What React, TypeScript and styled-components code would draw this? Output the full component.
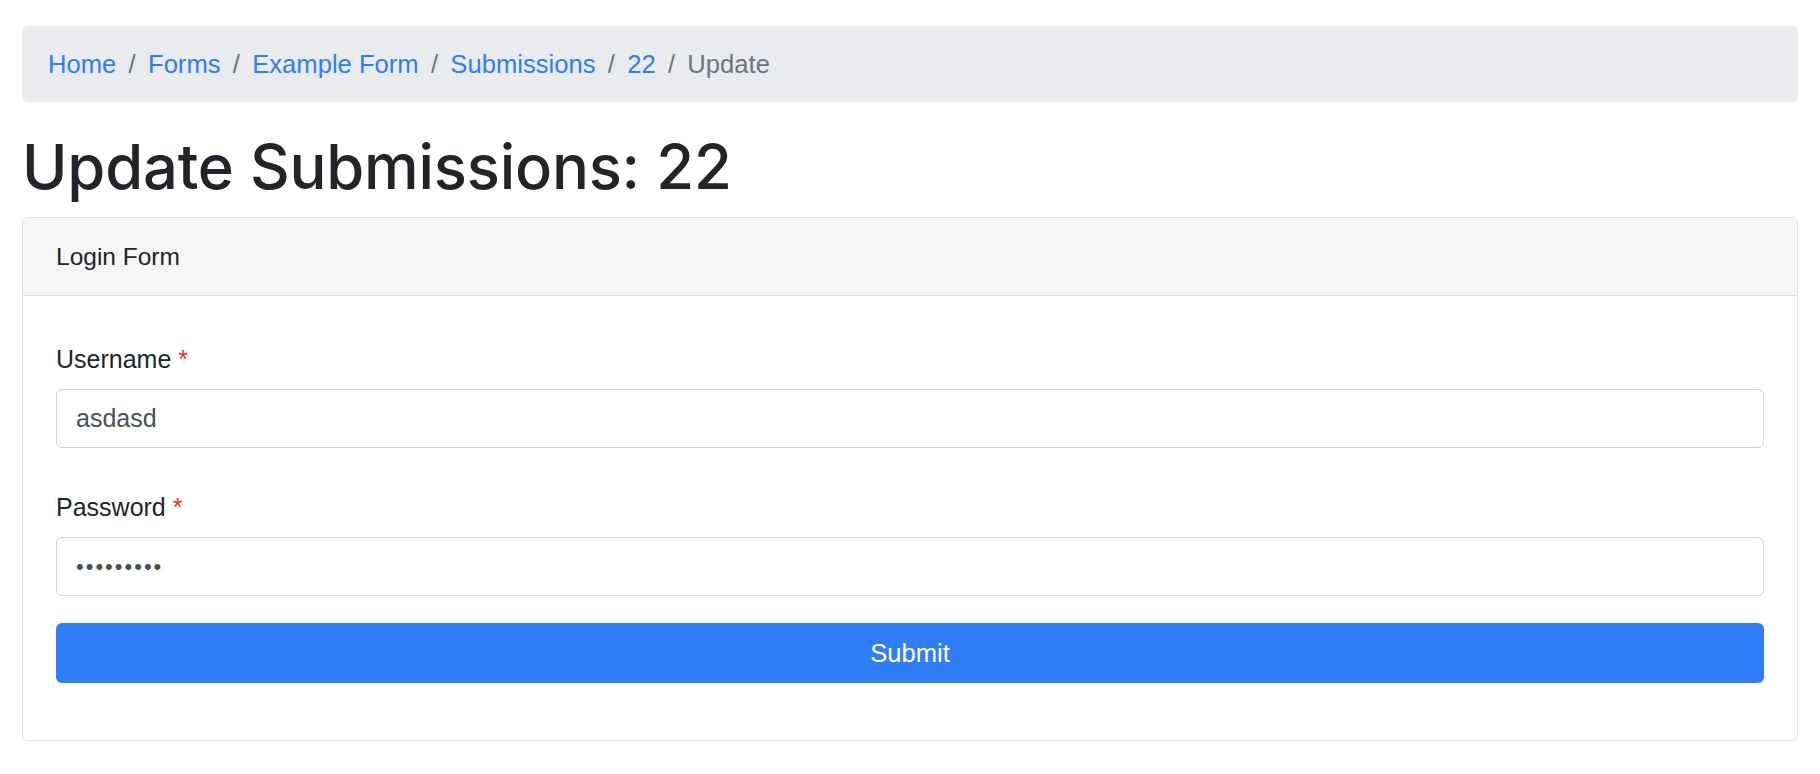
import styled, { createGlobalStyle } from "styled-components";

const GlobalStyle = createGlobalStyle`
    * {
        box-sizing: border-box;
    }
    body {
        margin: 0;
        background: #ffffff;
        font-family: "Liberation Sans", Arial, sans-serif;
        color: #212529;
    }
`;

const StyledPage = styled.div`
    padding: 26px 22px 0 22px;
`;

const StyledBreadcrumb = styled.nav`
    display: flex;
    align-items: center;
    height: 76px;
    padding: 0 26px;
    background: #e9ebef;
    border-radius: 6px;
    font-size: 25.6px;
    margin-bottom: 28px;
`;

const StyledCrumb = styled.a<{ active?: boolean }>`
    color: ${props => props.active ? '#6c757d' : '#2f7df6'};
    text-decoration: none;
    cursor: ${props => props.active ? 'default' : 'pointer'};
`;

const StyledDivider = styled.span`
    color: #6c757d;
    padding: 0 12.3px;
`;

const StyledTitle = styled.h1`
    margin: 0 0 13px 0;
    font-family: Inter, "Liberation Sans", Arial, sans-serif;
    font-size: 61.5px;
    font-weight: 500;
    line-height: 74px;
    letter-spacing: -0.2px;
    color: #212529;
`;

const StyledCard = styled.div`
    border: 1px solid #dfe1e5;
    border-radius: 6px;
    overflow: hidden;
`;

const StyledCardHeader = styled.div`
    height: 78px;
    display: flex;
    align-items: center;
    padding: 0 33px;
    background: #f6f6f6;
    border-bottom: 1px solid #d9dbdf;
    font-size: 24.5px;
`;

const StyledCardBody = styled.form`
    padding: 44px 33px 57px 33px;
    display: flex;
    flex-direction: column;
`;

const StyledFormGroup = styled.div<{ spacing: number }>`
    display: flex;
    flex-direction: column;
    margin-bottom: ${props => props.spacing}px;
`;

const StyledLabel = styled.label`
    font-size: 25px;
    line-height: 38px;
    margin-bottom: 11px;
    color: #212529;
`;

const StyledRequired = styled.span`
    color: #e8302a;
    margin-left: 7px;
`;

const StyledInput = styled.input`
    height: 59px;
    width: 100%;
    padding: 0 19px;
    border: 1.5px solid #cdd1d7;
    border-radius: 6px;
    font-family: "Liberation Sans", Arial, sans-serif;
    font-size: 25px;
    color: #495057;
    background: #ffffff;
    outline: none;

    &[type="password"] {
        letter-spacing: 2px;
        font-size: 22px;
    }
`;

const StyledButton = styled.button`
    height: 60px;
    width: 100%;
    border: none;
    border-radius: 6px;
    background: #307ef5;
    color: #ffffff;
    font-family: "Liberation Sans", Arial, sans-serif;
    font-size: 25.6px;
    cursor: pointer;
`;

const crumbs = ["Home", "Forms", "Example Form", "Submissions", "22"];

export default function App() {
    return (
        <StyledPage>
            <GlobalStyle />
            <StyledBreadcrumb>
                {crumbs.map((crumb) => (
                    <span key={crumb}>
                        <StyledCrumb>{crumb}</StyledCrumb>
                        <StyledDivider>/</StyledDivider>
                    </span>
                ))}
                <StyledCrumb active>Update</StyledCrumb>
            </StyledBreadcrumb>

            <StyledTitle>Update Submissions: 22</StyledTitle>

            <StyledCard>
                <StyledCardHeader>Login Form</StyledCardHeader>
                <StyledCardBody onSubmit={(e) => e.preventDefault()}>
                    <StyledFormGroup spacing={40}>
                        <StyledLabel>
                            Username<StyledRequired>*</StyledRequired>
                        </StyledLabel>
                        <StyledInput type="text" defaultValue="asdasd" />
                    </StyledFormGroup>
                    <StyledFormGroup spacing={27}>
                        <StyledLabel>
                            Password<StyledRequired>*</StyledRequired>
                        </StyledLabel>
                        <StyledInput type="password" defaultValue="asdasdasd" />
                    </StyledFormGroup>
                    <StyledButton type="submit">Submit</StyledButton>
                </StyledCardBody>
            </StyledCard>
        </StyledPage>
    );
}
